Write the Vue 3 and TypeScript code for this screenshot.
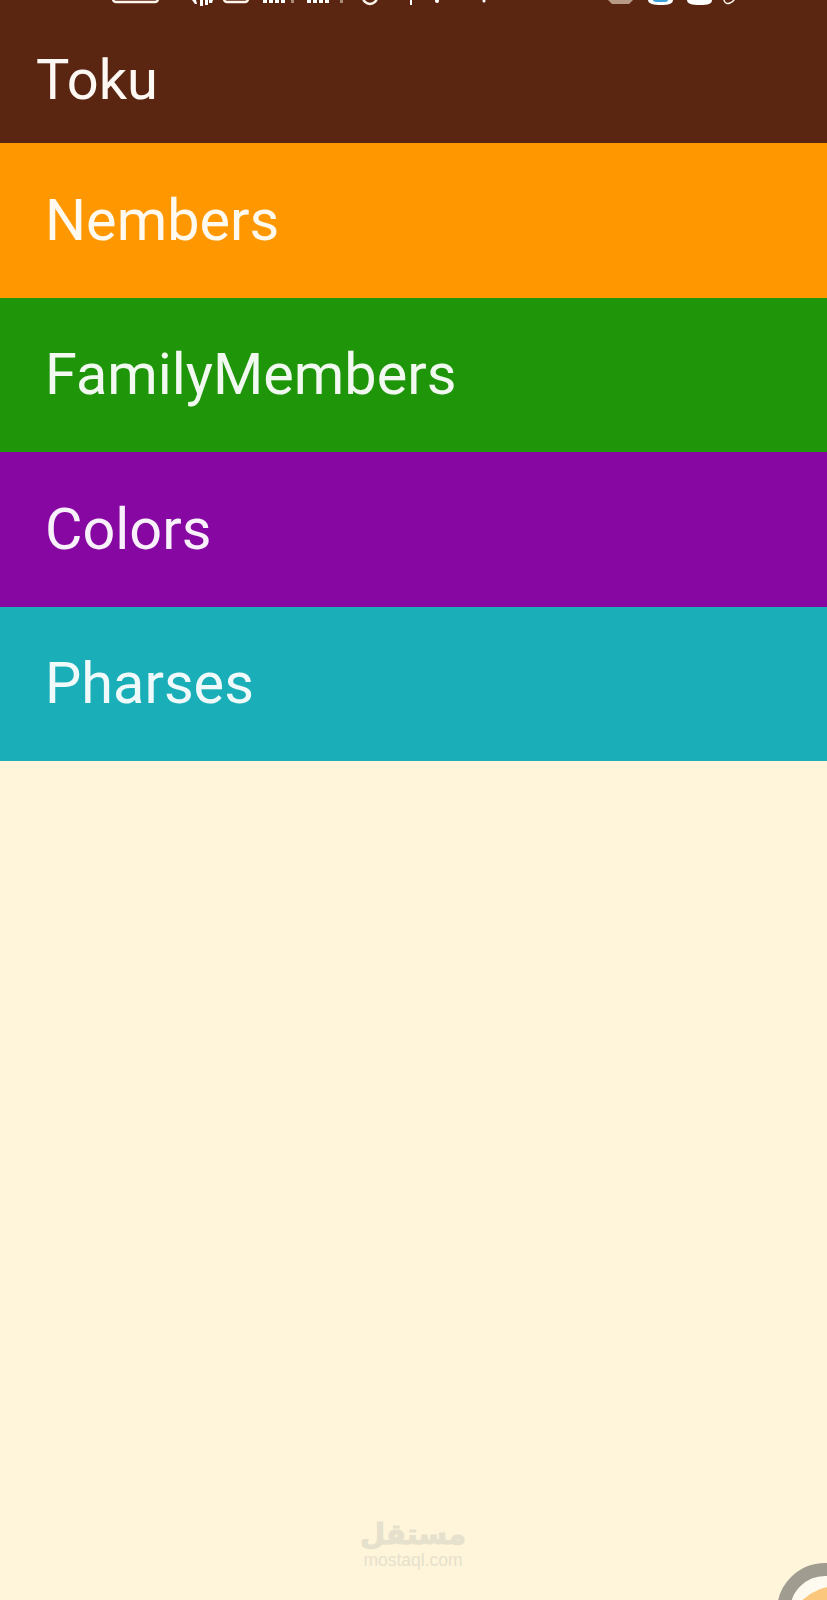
<script setup lang="ts">
const items = [
  { label: 'Nembers', color: '#ff9800' },
  { label: 'FamilyMembers', color: '#1f960a' },
  { label: 'Colors', color: '#8607a1' },
  { label: 'Pharses', color: '#19aeb8' },
]
</script>

<template>
  <div class="page">
    <header class="appbar">
      <!-- status bar icons, cut off by the top edge -->
      <svg class="status" width="827" height="8" viewBox="0 0 827 8" aria-hidden="true">
        <g fill="none" stroke="#fff6ee" stroke-width="2.5">
          <rect x="113" y="-8" width="45" height="10" rx="3" />
          <rect x="224" y="-8" width="24" height="10" rx="3" />
          <circle cx="370" cy="-3" r="7" />
          <path d="M724 -2v2a4 4 0 0 0 6 3c3-1 4-2 5-5" stroke-width="1.5" />
        </g>
        <g fill="#fff">
          <path d="M192 0h4l1 4h-2zM200 0h3v6h-3zM205 0h3v5h-3zM209 0h4l-1 3h-3z" />
          <rect x="263" y="0" width="4" height="3" />
          <rect x="269" y="0" width="4" height="3" />
          <rect x="275" y="0" width="4" height="3" />
          <rect x="281" y="0" width="4" height="3" />
          <rect x="291" y="0" width="3" height="3" fill="#a98c78" />
          <rect x="307" y="0" width="4" height="3" />
          <rect x="313" y="0" width="4" height="3" />
          <rect x="319" y="0" width="4" height="3" />
          <rect x="325" y="0" width="4" height="3" />
          <rect x="340" y="0" width="3" height="3" fill="#a98c78" />
          <rect x="410" y="0" width="2" height="5" />
          <circle cx="437" cy="1" r="2" />
          <circle cx="484" cy="1" r="1.5" />
          <path d="M608 0h25l-4 4h-17z" fill="#b79b86" />
          <path d="M648 0h25c0 4-5 5-12 5s-13-1-13-5z" />
          <path d="M653 0h15c0 2-3 2-7 2s-8 0-8-2z" fill="#3aa0dc" />
          <path d="M687 0h25c0 4-4 5-12 5s-13-1-13-5z" />
        </g>
      </svg>
      <span class="title">Toku</span>
    </header>

    <div v-for="item in items" :key="item.label" class="band" :style="{ background: item.color }">
      {{ item.label }}
    </div>

    <main class="rest">
      <div class="watermark">
        <span class="mark-ar">مستقل</span>
        <span class="mark-en">mostaql.com</span>
      </div>
      <div class="corner"><div class="corner-fill" /></div>
    </main>
  </div>
</template>

<style scoped>
.page {
  display: flex;
  flex-direction: column;
  width: 827px;
  height: 1600px;
  overflow: hidden;
  font-family: Roboto, "Liberation Sans", sans-serif;
  background: #fff5da;
}

.appbar {
  position: relative;
  flex: none;
  display: flex;
  align-items: center;
  box-sizing: border-box;
  height: 143px;
  padding: 17px 0 0 36px;
  background: #5a2511;
  color: #fdf8f4;
}

.status {
  position: absolute;
  top: 0;
  left: 0;
}

.title {
  font-size: 56px;
}

.band {
  flex: none;
  display: flex;
  align-items: center;
  box-sizing: border-box;
  height: 154.5px;
  padding-left: 45px;
  color: rgba(255, 255, 255, 0.94);
  font-size: 57.6px;
}

.rest {
  position: relative;
  flex: 1;
}

.watermark {
  position: absolute;
  top: 755px;
  left: 363px;
  width: 100px;
  display: flex;
  flex-direction: column;
  align-items: center;
  color: #e6e1cd;
}

.mark-ar {
  font-family: "DejaVu Sans", sans-serif;
  font-size: 29px;
  font-weight: 700;
  line-height: 36px;
  -webkit-text-stroke: 1px #e6e1cd;
}

.mark-en {
  font-family: "Liberation Sans", sans-serif;
  font-size: 17.5px;
  line-height: 16px;
}

.corner {
  position: absolute;
  top: 802px;
  left: 777px;
  width: 100px;
  height: 100px;
  box-sizing: border-box;
  border: 13px solid #a09c90;
  border-radius: 48px;
  background: #fffaf0;
  overflow: hidden;
}

.corner-fill {
  margin: 9px 0 0 -8px;
  width: 120px;
  height: 120px;
  border-radius: 50%;
  background: #fbc77c;
}
</style>
